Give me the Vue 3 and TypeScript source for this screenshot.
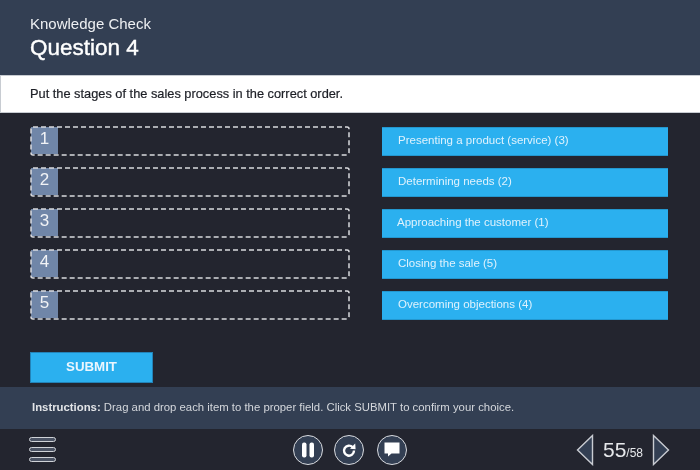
<script setup lang="ts">
const slots = [1, 2, 3, 4, 5];
const items = [
  { label: "Presenting a product (service) (3)", indent: 16 },
  { label: "Determining needs (2)", indent: 16 },
  { label: "Approaching the customer (1)", indent: 15 },
  { label: "Closing the sale (5)", indent: 16 },
  { label: "Overcoming objections (4)", indent: 16 },
];
</script>

<template>
  <div class="player">
    <header class="top">
      <div class="kicker">Knowledge Check</div>
      <h1>Question 4</h1>
    </header>
    <div class="prompt">Put the stages of the sales process in the correct order.</div>

    <main class="stage">
      <div class="columns">
        <div class="slots">
          <div v-for="n in slots" :key="n" class="slot">
            <span class="num">{{ n }}</span>
            <svg class="dashes" width="320" height="30" viewBox="0 0 320 30">
              <rect x="1" y="1" width="318" height="28" rx="2" fill="none" stroke="#d9dade" stroke-width="1.5" stroke-dasharray="5 3" />
            </svg>
          </div>
        </div>
        <div class="items">
          <div
            v-for="item in items"
            :key="item.label"
            class="item"
            :style="{ paddingLeft: item.indent + 'px' }"
          >
            {{ item.label }}
          </div>
        </div>
      </div>
      <button type="button" class="submit">SUBMIT</button>
    </main>

    <div class="instructions">
      <strong>Instructions:</strong> Drag and drop each item to the proper field. Click SUBMIT to confirm your choice.
    </div>

    <footer class="controls">
      <div class="menu">
        <span></span><span></span><span></span>
      </div>
      <div class="center">
        <button type="button" class="round" aria-label="Pause">
          <svg width="14" height="16" viewBox="0 0 14 16">
            <rect x="1" y="0.5" width="4.5" height="15" rx="2" fill="#fff" />
            <rect x="8.5" y="0.5" width="4.5" height="15" rx="2" fill="#fff" />
          </svg>
        </button>
        <button type="button" class="round" aria-label="Replay">
          <svg width="16" height="16" viewBox="0 0 16 16">
            <path d="M11.6 5.2A5 5 0 1 0 13 8.6" fill="none" stroke="#fff" stroke-width="2.4" />
            <path d="M9 6.8 14.6 7.2 14.2 1.6Z" fill="#fff" />
          </svg>
        </button>
        <button type="button" class="round notes" aria-label="Notes">
          <svg width="16" height="15" viewBox="0 0 16 15">
            <path d="M.5.5h15v11H7.5L4 14.5v-3H.5Z" fill="#fff" />
          </svg>
        </button>
      </div>
      <div class="pager">
        <svg width="18" height="32" viewBox="0 0 18 32">
          <path d="M16.5 1.5 1.5 16l15 14.5Z" fill="#333f53" stroke="#c9ccd2" stroke-width="1.4" />
        </svg>
        <div class="count"><span class="cur">55</span><span class="total">/58</span></div>
        <svg width="18" height="32" viewBox="0 0 18 32">
          <path d="M1.5 1.5 16.5 16l-15 14.5Z" fill="#333f53" stroke="#c9ccd2" stroke-width="1.4" />
        </svg>
      </div>
    </footer>
  </div>
</template>

<style scoped>
.player {
  width: 700px;
  height: 470px;
  display: flex;
  flex-direction: column;
  overflow: hidden;
  background: #23252f;
  color: #fff;
  font-family: "Liberation Sans", Arial, sans-serif;
  filter: blur(0.35px);
}

.top {
  height: 75px;
  box-sizing: border-box;
  padding: 15px 30px 0;
  background: #333f53;
}

.kicker {
  font-size: 15px;
  line-height: 18px;
  color: #eef0f3;
}

h1 {
  margin: 2px 0 0;
  font-size: 22.5px;
  line-height: 26px;
  font-weight: 400;
  -webkit-text-stroke: 0.4px #fff;
}

.prompt {
  height: 38px;
  box-sizing: border-box;
  padding-left: 29px;
  line-height: 36px;
  font-size: 12.8px;
  color: #1d1f26;
  background: #fff;
  border-top: 1px solid #c8ccd2;
  border-bottom: 1px solid #c8ccd2;
  border-left: 1px solid #c8ccd2;
  -webkit-text-stroke: 0.2px #1d1f26;
}

.stage {
  flex: 1;
  padding: 13px 30px 0;
}

.columns {
  display: flex;
  justify-content: space-between;
  height: 226px;
}

.slots,
.items {
  display: flex;
  flex-direction: column;
  gap: 11px;
}

.slot {
  position: relative;
  width: 320px;
  height: 30px;
  box-sizing: border-box;
  padding: 1px;
}

.dashes {
  position: absolute;
  left: 0;
  top: 0;
}

.num {
  display: block;
  width: 27px;
  height: 27px;
  background: #7086a8;
  font-size: 17px;
  line-height: 24px;
  text-align: center;
  color: #f1f3f6;
}

.items {
  margin: 1px 2px 0 0;
  gap: 12px;
}

.item {
  width: 286px;
  height: 29px;
  box-sizing: border-box;
  padding-top: 5px;
  background: #2bb0ef;
  border-top: 1px solid #2397cf;
  border-bottom: 1px solid #2397cf;
  font-size: 11.5px;
  line-height: 15px;
  color: #dff2fd;
}

.submit {
  display: block;
  width: 123px;
  height: 31px;
  padding: 0 0 3px;
  border: 1px solid #2383b8;
  background: #2bb0ef;
  color: #eaf6fe;
  font: 700 13.3px "Liberation Sans", Arial, sans-serif;
}

.instructions {
  height: 42px;
  box-sizing: border-box;
  padding-left: 32px;
  line-height: 40px;
  font-size: 11.35px;
  color: #d4d7dc;
  background: #333f53;
}

.instructions strong {
  color: #e3e5e8;
}

.controls {
  height: 41px;
  flex-shrink: 0;
  padding: 0 30px 0 29px;
  display: flex;
  align-items: center;
}

.menu {
  display: flex;
  flex-direction: column;
  gap: 5px;
  width: 27px;
}

.menu span {
  height: 5px;
  box-sizing: border-box;
  border: 1px solid #cfd2d7;
  border-radius: 3px;
  background: #4a5263;
}

.center {
  display: flex;
  gap: 11px;
  margin-left: 237px;
}

.round {
  width: 30px;
  height: 30px;
  padding: 0;
  display: flex;
  align-items: center;
  justify-content: center;
  border: 1.5px solid #d9dbdf;
  border-radius: 50%;
  background: #333f53;
}

.notes {
  margin-left: 2px;
}

.pager {
  margin-left: auto;
  display: flex;
  align-items: center;
  gap: 9px;
}

.count {
  display: flex;
  align-items: baseline;
  color: #e6e8eb;
}

.cur {
  font-size: 21px;
}

.total {
  font-size: 12px;
}
</style>
